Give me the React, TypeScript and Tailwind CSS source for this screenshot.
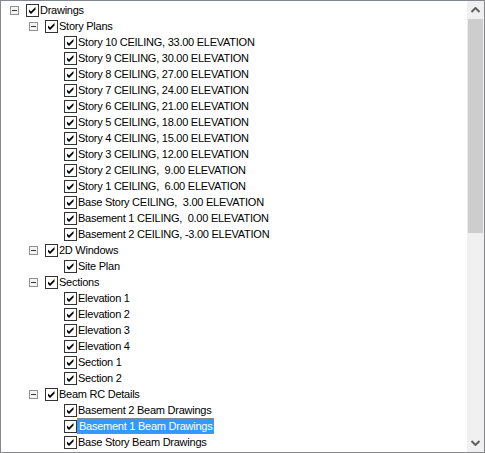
import React from "react";

type Node = {
  label: string;
  level: number;
  expander?: boolean;
  selected?: boolean;
};

const stories = [
  "Story 10 CEILING, 33.00 ELEVATION",
  "Story 9 CEILING, 30.00 ELEVATION",
  "Story 8 CEILING, 27.00 ELEVATION",
  "Story 7 CEILING, 24.00 ELEVATION",
  "Story 6 CEILING, 21.00 ELEVATION",
  "Story 5 CEILING, 18.00 ELEVATION",
  "Story 4 CEILING, 15.00 ELEVATION",
  "Story 3 CEILING, 12.00 ELEVATION",
  "Story 2 CEILING,  9.00 ELEVATION",
  "Story 1 CEILING,  6.00 ELEVATION",
  "Base Story CEILING,  3.00 ELEVATION",
  "Basement 1 CEILING,  0.00 ELEVATION",
  "Basement 2 CEILING, -3.00 ELEVATION",
];

const nodes: Node[] = [
  { label: "Drawings", level: 0, expander: true },
  { label: "Story Plans", level: 1, expander: true },
  ...stories.map((s) => ({ label: s, level: 2 })),
  { label: "2D Windows", level: 1, expander: true },
  { label: "Site Plan", level: 2 },
  { label: "Sections", level: 1, expander: true },
  { label: "Elevation 1", level: 2 },
  { label: "Elevation 2", level: 2 },
  { label: "Elevation 3", level: 2 },
  { label: "Elevation 4", level: 2 },
  { label: "Section 1", level: 2 },
  { label: "Section 2", level: 2 },
  { label: "Beam RC Details", level: 1, expander: true },
  { label: "Basement 2 Beam Drawings", level: 2 },
  { label: "Basement 1 Beam Drawings", level: 2, selected: true },
  { label: "Base Story Beam Drawings", level: 2 },
];

function Expander() {
  return (
    <svg width="9" height="9" viewBox="0 0 9 9" className="block">
      <rect x="0.5" y="0.5" width="8" height="8" fill="#f4f4f4" stroke="#919191" />
      <line x1="2" y1="4.5" x2="7" y2="4.5" stroke="#333" strokeWidth="1" />
    </svg>
  );
}

function CheckBox() {
  return (
    <svg width="13" height="13" viewBox="0 0 13 13" className="block shrink-0">
      <rect x="0.5" y="0.5" width="12" height="12" fill="#fff" stroke="#333" />
      <path d="M3 5.5 L5 7.5 L9.5 3 L9.5 5.5 L5 10 L3 8 Z" fill="#000" />
    </svg>
  );
}

function Row({ node }: { node: Node }) {
  return (
    <div
      className="flex h-[16px] items-center"
      style={{ paddingLeft: 9 + node.level * 19 }}
    >
      <div className="flex w-[16px] shrink-0 items-center">
        {node.expander && <Expander />}
      </div>
      <CheckBox />
      <span
        className={
          node.selected
            ? "h-[16px] whitespace-pre border border-dotted border-[#d08020] bg-[#3399ff] pl-[1px] pr-[1px] leading-[14px] text-white"
            : "h-[16px] whitespace-pre border border-transparent pr-[1px] leading-[14px] text-black"
        }
      >
        {node.label}
      </span>
    </div>
  );
}

function ScrollBar() {
  return (
    <div className="flex w-[17px] shrink-0 flex-col bg-[#f0f0f0]">
      <div className="flex h-[18px] items-center justify-center">
        <svg width="9" height="6" viewBox="0 0 9 6">
          <path d="M0.5 5 L4.5 1 L8.5 5" fill="none" stroke="#606060" strokeWidth="2" />
        </svg>
      </div>
      <div className="mx-[1px] h-[214px] bg-[#cdcdcd]" />
      <div className="flex-1" />
      <div className="flex h-[18px] items-center justify-center">
        <svg width="9" height="6" viewBox="0 0 9 6">
          <path d="M0.5 1 L4.5 5 L8.5 1" fill="none" stroke="#606060" strokeWidth="2" />
        </svg>
      </div>
    </div>
  );
}

export default function App() {
  return (
    <div
      className="flex h-[453px] w-[485px] overflow-hidden border border-[#828790] bg-white text-[11px] tracking-[-0.25px]"
      style={{ fontFamily: '"Liberation Sans", Arial, sans-serif' }}
    >
      <div className="flex-1 overflow-hidden pt-[1px]">
        {nodes.map((n, i) => (
          <Row key={i} node={n} />
        ))}
      </div>
      <ScrollBar />
    </div>
  );
}
